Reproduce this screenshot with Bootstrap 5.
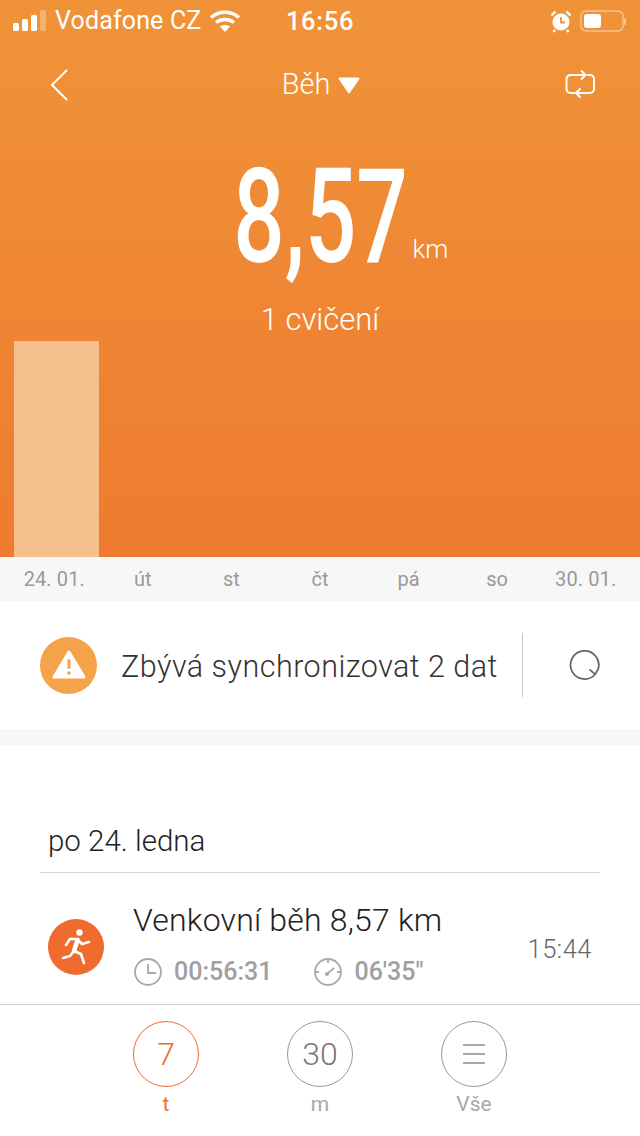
<!DOCTYPE html>
<html lang="cs">
<head>
  <meta charset="UTF-8">
  <meta name="viewport" content="width=device-width, initial-scale=1">
  <title>Běh</title>
  <link href="https://cdn.jsdelivr.net/npm/bootstrap@5.3.2/dist/css/bootstrap.min.css" rel="stylesheet">
  <style>
    html, body { margin: 0; height: 1136px; overflow: hidden; background: #fff; }
    body { width: 640px; font-family: Roboto, "Liberation Sans", sans-serif; color: #333; }
    .hero { height: 557px; background: linear-gradient(180deg, #f09338 0%, #ee7b30 100%); color: #fff; }
    .status-row { height: 40px; padding: 2px 14px 0 13px; font-size: 25px; position: relative; }
    .carrier { margin-left: 8px; margin-right: 8px; letter-spacing: .15px; }
    .clock { position: absolute; left: 0; right: 0; text-align: center; font-weight: 500; font-size: 25.5px; letter-spacing: .7px; }
    .nav-row { height: 90px; padding: 0 44px 0 50px; font-size: 29px; font-weight: 300; }
    .value-row { height: 170px; display: grid; grid-template-columns: 1fr 173px 1fr; align-items: start; }
    .big-num { font-size: 131px; line-height: 131px; font-weight: 500; transform: scaleX(.69); margin-top: 22px; white-space: nowrap; display: flex; justify-content: center; }
    .big-unit { font-size: 26px; font-weight: 300; margin-left: 6px; margin-top: 100px; }
    .count-row { height: 41px; font-size: 31px; font-weight: 300; line-height: 40px; }
    .chart-area { height: 216px; padding: 0 10px; display: grid; grid-template-columns: repeat(7, 1fr); align-items: end; }
    .bar-day { margin: 0 0 0 4px; background: #f5c08e; }
    .days { height: 44px; background: #f7f7f7; padding: 0 10px; display: grid; grid-template-columns: repeat(7, 1fr); align-items: center; text-align: center; color: #999; font-size: 20px; letter-spacing: .1px; }
    .sync-row { height: 128px; padding: 0 40px; }
    .warn-dot { width: 57px; height: 57px; border-radius: 50%; background: #f4a34b; flex: none; }
    .sync-text { font-size: 30.5px; font-weight: 300; color: #333; margin-left: 24px; margin-top: 3px; white-space: nowrap; letter-spacing: .47px; }
    .sync-sep { width: 1px; height: 64px; background: #c8c8c8; margin-left: 24px; }
    .sync-btn { margin-left: 46px; }
    .gap-band { height: 16px; background: #f7f7f7; }
    .list-area { height: 259px; padding: 0 40px; }
    .date-head { height: 128px; display: flex; align-items: flex-end; padding: 0 8px 9px; font-size: 29.5px; font-weight: 300; color: #222; border-bottom: 1px solid #d6d6d6; }
    .run-row { padding: 0 8px; height: 130px; }
    .run-dot { width: 56px; height: 56px; border-radius: 50%; background: #ef6c2e; flex: none; margin-top: 46px; }
    .run-body { margin-left: 29px; padding-top: 27px; }
    .run-title { font-size: 32px; font-weight: 300; line-height: 40px; color: #222; white-space: nowrap; letter-spacing: .2px; }
    .run-stats { font-size: 25px; line-height: 34px; color: #a0a0a0; font-weight: 500; margin-top: 15px; }
    .stat-icon { margin-right: 11px; flex: none; }
    .stat-next { margin-left: 41px; }
    .run-time { margin-left: auto; font-size: 25.5px; font-weight: 300; color: #666; margin-top: 57px; letter-spacing: .5px; }
    .tab-bar { height: 132px; border-top: 1px solid #cfcfcf; padding-top: 16px; gap: 87px; }
    .tab-item { width: 67px; color: #a8a8a8; font-size: 21px; line-height: 24px; text-align: center; }
    .tab-ring { width: 66px; height: 66px; margin-left: .5px; border-radius: 50%; border: 1px solid #999; font-size: 32px; font-weight: 300; color: #777; margin-bottom: 5px; }
    .tab-item.on { color: #ef6c2e; }
    .tab-item.on .tab-ring { border-color: #ef6c2e; color: #ef6c2e; }
  </style>
</head>
<body>
  <div class="hero d-flex flex-column">
    <div class="status-row d-flex align-items-center">
      <svg width="34" height="22" viewBox="0 0 34 22"><g fill="#fff"><rect x="0" y="13" width="6" height="8" rx="1.5"/><rect x="9" y="9" width="6" height="12" rx="1.5"/><rect x="18" y="5" width="6" height="16" rx="1.5"/></g><rect x="27" y="0" width="6" height="21" rx="1.5" fill="#fff" fill-opacity=".3"/></svg>
      <span class="carrier">Vodafone CZ</span>
      <svg width="32" height="24" viewBox="0 0 32 24"><g fill="none" stroke="#fff" stroke-width="3.4"><path d="M2 8.500C10 1.500 22 1.500 30 8.500"/><path d="M7 13.500C12 9.500 20 9.500 25 13.500"/></g><path d="M11 17.500C14 15.500 18 15.500 21 17.500L16 23Z" fill="#fff"/></svg>
      <span class="clock">16:56</span>
      <div class="ms-auto d-flex align-items-center">
        <svg width="22" height="24" viewBox="0 0 22 24" class="me-2"><circle cx="11" cy="13" r="8.500" fill="#fff"/><path d="M11 8v5.500h4" fill="none" stroke="#f0913a" stroke-width="1.800"/><path d="M1.500 6.500 5.500 2.500M20.500 6.500 16.500 2.500M5 21 3.500 23M17 21 18.500 23" stroke="#fff" stroke-width="2.400"/></svg>
        <svg width="46" height="24" viewBox="0 0 46 24"><rect x="1" y="2" width="42" height="20" rx="5" fill="none" stroke="#fff" stroke-opacity=".45" stroke-width="1.500"/><rect x="4" y="5" width="17" height="14" rx="3" fill="#fff"/><rect x="44" y="9" width="2" height="7" rx="1" fill="#fff" fill-opacity=".45"/></svg>
      </div>
    </div>
    <div class="nav-row d-flex align-items-center justify-content-between">
      <svg width="20" height="34" viewBox="0 0 20 34"><path d="M17 2 2 17l15 15" fill="none" stroke="#fff" stroke-width="2"/></svg>
      <div class="d-flex align-items-center gap-2 ms-2"><span>Běh</span>
        <svg width="22" height="17" viewBox="0 0 22 17"><path d="M1.500 1.500h19L11 15.500Z" fill="#fff" stroke="#fff" stroke-width="2" stroke-linejoin="round"/></svg></div>
      <svg width="32" height="32" viewBox="0 0 32 32"><g fill="none" stroke="#fff" stroke-width="2" stroke-linecap="round" stroke-linejoin="round"><path d="M21 6H6.500a4 4 0 0 0-4 4V20a4 4 0 0 0 4 4H11"/><path d="M17.500 2l4 4-4 4"/><path d="M12 24H26a4 4 0 0 0 4-4V10a4 4 0 0 0-4-4H23.500"/><path d="M16 20l-4 4 4 4"/></g></svg>
    </div>
    <div class="value-row">
      <span></span><span class="big-num">8,57</span><span class="big-unit">km</span>
    </div>
    <div class="count-row text-center">1 cvičení</div>
    <div class="flex-grow-1"></div>
    <div class="chart-area">
      <div class="bar-day" style="height:216px"></div>
    </div>
  </div>
  <div class="days">
    <span>24. 01.</span><span>út</span><span>st</span><span>čt</span><span>pá</span><span>so</span><span>30. 01.</span>
  </div>
  <div class="sync-row d-flex align-items-center">
    <div class="warn-dot d-flex align-items-center justify-content-center">
      <svg width="36" height="32" viewBox="0 0 36 32"><path d="M18 3 33 28H3Z" fill="#fff" stroke="#fff" stroke-width="3" stroke-linejoin="round"/><rect x="16.500" y="10" width="3" height="10" rx="1.500" fill="#f4a34b"/><circle cx="18" cy="24" r="1.800" fill="#f4a34b"/></svg>
    </div>
    <span class="sync-text">Zbývá synchronizovat 2 dat</span>
    <div class="sync-sep"></div>
    <svg class="sync-btn" width="32" height="32" viewBox="0 0 32 32"><path d="M21 20.500 27 25.500A14.500 14.500 0 1 1 30 20 L27 25.500" fill="none" stroke="#666" stroke-width="1.800"/></svg>
  </div>
  <div class="gap-band"></div>
  <div class="list-area">
    <div class="date-head">po 24. ledna</div>
    <div class="run-row d-flex">
      <div class="run-dot">
        <svg width="56" height="56" viewBox="0 0 56 56"><circle cx="31.500" cy="13.500" r="3.200" fill="#fff"/><g fill="none" stroke="#fff" stroke-width="2.600" stroke-linecap="round" stroke-linejoin="round"><path d="M30 20H22L18 26"/><path d="M30 21 34 25 41 23"/><path d="M26 32 22 37 15 39"/><path d="M26 32 33 35 36 44"/><path d="M29.500 21 26 32" stroke-width="4.500"/></g></svg>
      </div>
      <div class="run-body">
        <div class="run-title">Venkovní běh 8,57 km</div>
        <div class="run-stats d-flex align-items-center">
          <svg width="30" height="30" viewBox="0 0 30 30" class="stat-icon"><circle cx="15" cy="15" r="13" fill="none" stroke="#a8a8a8" stroke-width="1.800"/><path d="M15 7v9h8" fill="none" stroke="#a8a8a8" stroke-width="1.800"/></svg>
          <span>00:56:31</span>
          <svg width="30" height="30" viewBox="0 0 30 30" class="stat-icon stat-next"><circle cx="15" cy="15" r="13" fill="none" stroke="#a8a8a8" stroke-width="1.800"/><path d="M15 2v4M2 15h4M28 15h-4M14 17l7-6" fill="none" stroke="#a8a8a8" stroke-width="1.800"/><circle cx="14" cy="17" r="2" fill="#a8a8a8"/></svg>
          <span>06′35″</span>
        </div>
      </div>
      <span class="run-time">15:44</span>
    </div>
  </div>
  <div class="tab-bar d-flex justify-content-center">
    <div class="tab-item on"><div class="tab-ring d-flex align-items-center justify-content-center">7</div>t</div>
    <div class="tab-item"><div class="tab-ring d-flex align-items-center justify-content-center">30</div>m</div>
    <div class="tab-item"><div class="tab-ring d-flex align-items-center justify-content-center">
      <svg width="24" height="22" viewBox="0 0 24 22"><path d="M1 2h22M1 11h22M1 20h22" stroke="#8c8c8c" stroke-width="1.600"/></svg></div>Vše</div>
  </div>
</body>
</html>
